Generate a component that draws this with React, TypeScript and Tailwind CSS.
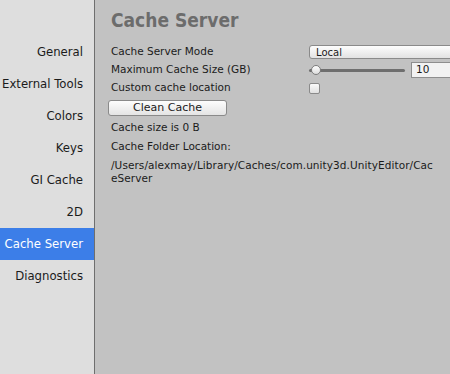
import React from 'react'

const sections = ['General', 'External Tools', 'Colors', 'Keys', 'GI Cache', '2D', 'Cache Server', 'Diagnostics']

export default function App() {
  const font = { fontFamily: '"DejaVu Sans", sans-serif' }
  return (
    <div className="flex h-[374px] w-[450px] overflow-hidden bg-[#c2c2c2] text-[10.5px] text-[#1b1b1b]" style={font}>
      <nav className="w-[95px] shrink-0 border-r border-[#6e6e6e] bg-[#dedede] pt-[36px] text-[11.7px]">
        {sections.map((s) => (
          <div
            key={s}
            className={
              s === 'Cache Server'
                ? 'flex h-[32px] items-center justify-end bg-[#3c7ee8] pr-[11px] pt-[2px] text-white'
                : 'flex h-[32px] items-center justify-end pr-[11px] pt-[2px]'
            }
          >
            {s}
          </div>
        ))}
      </nav>

      <main className="w-[420px] shrink-0 pl-[16px] pt-[7px]">
        <h1
          className="h-[36px] pt-[1px] text-[19px] font-bold leading-[24px] text-[#6c6c6c]"
          style={{ fontFamily: '"DejaVu Sans Condensed", "DejaVu Sans", sans-serif', fontStretch: 'condensed' }}
        >
          Cache Server
        </h1>

        <div className="flex h-[18px] items-center">
          <span className="w-[198px]">Cache Server Mode</span>
          <div className="flex h-[14px] flex-1 items-center rounded-[3px] border border-[#8a8a8a] bg-gradient-to-b from-[#fdfdfd] to-[#e2e2e2] pl-[6px] text-[10px]">
            Local
          </div>
        </div>

        <div className="flex h-[18px] items-center">
          <span className="w-[198px]">Maximum Cache Size (GB)</span>
          <div className="relative flex h-[12px] w-[96px] items-center">
            <div className="h-[3px] w-full rounded-full bg-[#6e6e6e]" />
            <div className="absolute left-[2px] top-[1px] h-[10px] w-[10px] rounded-full border border-[#7d7d7d] bg-gradient-to-b from-white to-[#dcdcdc]" />
          </div>
          <div className="ml-[6px] flex h-[16px] flex-1 items-center border border-[#8e8e8e] bg-[#f2f2f2] pl-[4px]">10</div>
        </div>

        <div className="flex h-[18px] items-center">
          <span className="w-[198px]">Custom cache location</span>
          <div className="h-[11px] w-[11px] rounded-[2px] border border-[#8a8a8a] bg-gradient-to-b from-[#fafafa] to-[#e0e0e0]" />
        </div>

        <div className="flex h-[22px] items-center">
          <button className="ml-[-3px] h-[16px] w-[119px] rounded-[3px] border border-[#8a8a8a] bg-gradient-to-b from-[#fdfdfd] to-[#e4e4e4] text-[11px] leading-[14px] text-[#1b1b1b]">
            Clean Cache
          </button>
        </div>

        <div className="flex h-[18px] items-center">Cache size is 0 B</div>
        <div className="flex h-[19px] items-center">Cache Folder Location:</div>
        <div className="pt-[3px] leading-[13px] tracking-[0.08px]">
          <div>/Users/alexmay/Library/Caches/com.unity3d.UnityEditor/Cac</div>
          <div>eServer</div>
        </div>
      </main>
    </div>
  )
}
